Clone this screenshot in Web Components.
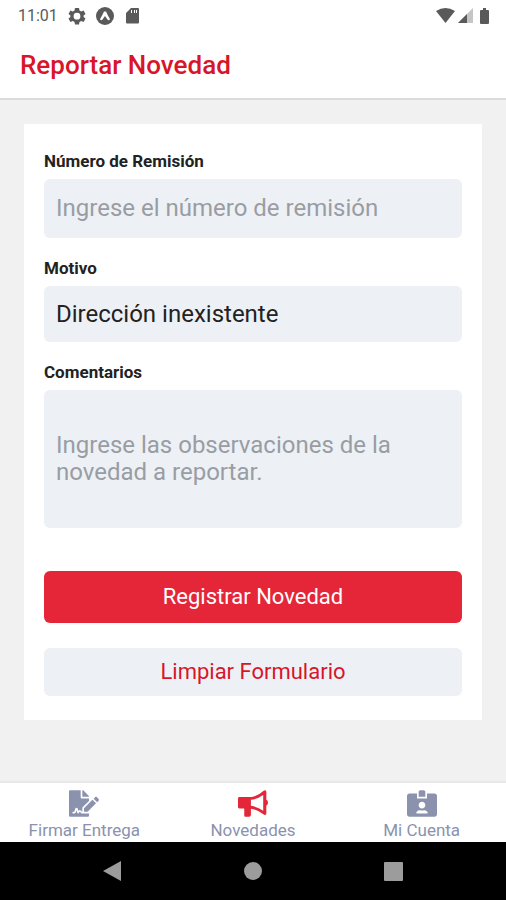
<!DOCTYPE html>
<html lang="es">
<head>
<meta charset="utf-8">
<meta name="viewport" content="width=device-width, initial-scale=1">
<title>Reportar Novedad</title>
<style>
  body {
    margin: 0;
    font-family: Roboto, "Liberation Sans", sans-serif;
    --red: #e52538;
    --red-text: #d9152a;
    --field: #edf1f6;
    --muted: #8a92ae;
  }
</style>
</head>
<body>
<report-app></report-app>

<script>
class StatusBar extends HTMLElement {
  constructor() {
    super();
    this.attachShadow({ mode: "open" });
  }

  connectedCallback() {
    this.shadowRoot.innerHTML = `
      <style>
        :host {
          display: flex;
          justify-content: space-between;
          height: 31px;
          padding: 0 13px 0 18px;
          background: #fff;
          color: #5a5a5a;
          font-size: 16px;
          line-height: 31px;
        }
        div {
          display: flex;
          align-items: center;
        }
        .left { gap: 9px; }
        .right { gap: 3px; }
        svg { display: block; fill: currentColor; }
      </style>
      <div class="left">
        <span>${this.getAttribute("time")}</span>
        <svg width="20" height="18" viewBox="0 0 20 18" aria-hidden="true"><path fill-rule="evenodd" d="M8 1h4l.5 2.500 1.700 1 2.400-.9 1.900 3.300L16.600 8.500v1.500l1.900 1.600-1.900 3.300-2.400-.9-1.700 1L12 17.500H8L7.500 15l-1.700-1-2.400.9-1.900-3.300L3.400 10V8.500L1.500 6.900l1.900-3.300 2.400.9 1.700-1zM10 5.800a3.400 3.400 0 1 0 0 6.800 3.400 3.400 0 0 0 0-6.800z"/></svg>
        <svg width="18" height="18" viewBox="0 0 18 18" aria-hidden="true"><circle cx="9" cy="9" r="9"/><path d="M8 4.500h2c1.300 3 2.500 5 4 7.700-.8 1.600-1.900 1.300-2.700.1L9 9l-2.300 3.300c-.8 1.200-1.900 1.500-2.700-.1 1.500-2.700 2.700-4.700 4-7.700z" fill="#fff"/></svg>
        <svg width="18" height="16" viewBox="0 0 18 16" aria-hidden="true"><path fill-rule="evenodd" d="M8 0h7q1 0 1 1v13.500q0 1-1 1H4q-1 0-1-1V5zM8 2v3h1V2zm3 0v3h1V2zm2 0v3h1V2z"/></svg>
      </div>
      <div class="right">
        <svg width="19" height="15" viewBox="0 0 19 15" aria-hidden="true"><path d="M9.500 15 0 3Q9.500-3 19 3z"/></svg>
        <svg width="15" height="15" viewBox="0 0 15 15" aria-hidden="true"><path d="M15 0v15H0z" opacity=".35"/><path d="M9 6v9H0z"/></svg>
        <svg width="17" height="16" viewBox="0 0 17 16" aria-hidden="true"><path d="M5 2h2V0h3v2h2q1 0 1 1v12q0 1-1 1H5q-1 0-1-1V3q0-1 1-1z"/></svg>
      </div>
    `;
  }
}

class PageHeader extends HTMLElement {
  constructor() {
    super();
    this.attachShadow({ mode: "open" });
  }

  connectedCallback() {
    this.shadowRoot.innerHTML = `
      <style>
        :host {
          display: block;
          padding: 18px 20px 17px;
          background: #fff;
          border-bottom: 2px solid #dcdcdc;
        }
        h1 {
          margin: 0;
          color: var(--red-text);
          font-size: 26px;
          font-weight: 500;
          line-height: 32px;
        }
      </style>
      <h1><slot></slot></h1>
    `;
  }
}

class FormField extends HTMLElement {
  constructor() {
    super();
    this.attachShadow({ mode: "open" });
  }

  connectedCallback() {
    this.shadowRoot.innerHTML = `
      <style>
        :host { display: block; }
        label {
          display: block;
          margin-bottom: 8px;
          color: #222;
          font-size: 17px;
          font-weight: 700;
          line-height: 20px;
        }
        input, select, textarea {
          display: block;
          box-sizing: border-box;
          width: 100%;
          margin: 0;
          padding: 16px 12px;
          border: 0;
          border-radius: 6px;
          appearance: none;
          resize: none;
          background: var(--field);
          color: #222;
          font: 24px/27px Roboto, "Liberation Sans", sans-serif;
        }
        select { padding: 15px 12px 14px; }
        textarea { padding: 42px 12px; height: 138px; overflow: hidden; }
        ::placeholder { color: #999da3; opacity: 1; }
      </style>
      <label for="control">${this.getAttribute("label")}</label>
      ${this.control()}
    `;
  }

  control() {
    const hint = this.getAttribute("placeholder") || "";
    switch (this.getAttribute("type")) {
      case "select":
        return `<select id="control"><option>${this.getAttribute("value")}</option></select>`;
      case "textarea":
        return `<textarea id="control" rows="2" placeholder="${hint}"></textarea>`;
      default:
        return `<input id="control" type="text" placeholder="${hint}">`;
    }
  }

  clear() {
    const el = this.shadowRoot.querySelector("#control");
    if (el.tagName === "SELECT") el.selectedIndex = 0;
    else el.value = "";
  }
}

class ActionButton extends HTMLElement {
  constructor() {
    super();
    this.attachShadow({ mode: "open" });
  }

  connectedCallback() {
    this.shadowRoot.innerHTML = `
      <style>
        :host { display: block; }
        button {
          display: block;
          width: 100%;
          padding: 10px 12px;
          border: 0;
          border-radius: 6px;
          background: var(--field);
          color: var(--red-text);
          font: 22px/28px Roboto, "Liberation Sans", sans-serif;
          cursor: pointer;
        }
        :host([primary]) button {
          padding: 12px;
          background: var(--red);
          color: #fff;
        }
      </style>
      <button type="button"><slot></slot></button>
    `;
  }
}

const TAB_ICONS = {
  sign: "M218.17 424.14c-2.95-5.92-8.09-6.52-10.17-6.52s-7.22.59-10.02 6.19l-7.67 15.34c-6.37 12.78-25.03 11.37-29.48-2.09L144 386.59l-10.61 31.88c-5.89 17.66-22.38 29.53-41 29.53H80c-8.84 0-16-7.16-16-16s7.16-16 16-16h12.39c4.83 0 9.11-3.08 10.64-7.66l18.19-54.64c3.3-9.81 12.44-16.41 22.78-16.41s19.48 6.59 22.77 16.41l13.88 41.64c19.75-16.19 54.06-9.7 66 14.16 1.89 3.78 5.49 5.95 9.36 6.26v-82.12l128-127.09V160H248c-13.2 0-24-10.8-24-24V0H24C10.7 0 0 10.7 0 24v464c0 13.3 10.7 24 24 24h336c13.3 0 24-10.7 24-24v-40l-128-.11c-16.12-.31-30.58-9.28-37.83-23.75zM384 121.9c0-6.3-2.5-12.4-7-16.9L279.1 7c-4.5-4.5-10.6-7-17-7H256v128h128v-6.1zm-96 225.06V416h68.99l161.68-162.78-67.88-67.88L288 346.96zm280.54-179.63l-31.87-31.87c-9.94-9.94-26.07-9.94-36.01 0l-27.25 27.25 67.88 67.88 27.25-27.25c9.95-9.94 9.95-26.07 0-36.01z",
  horn: "M24 130H260Q390 108 486 14Q500 0 522 0Q544 4 544 30V186Q576 200 576 240T544 294V450Q542 476 522 478Q502 478 486 464Q370 366 248 356V470Q246 500 222 512H140Q120 508 120 484V350H24Q0 346 0 322V158Q0 132 24 130zM248 186V300Q380 320 484 396V92Q370 172 248 186z",
  card: "M528 64H384v96H192V64H48C21.5 64 0 85.5 0 112v352c0 26.5 21.5 48 48 48h480c26.5 0 48-21.5 48-48V112c0-26.5-21.5-48-48-48zM288 224c35.3 0 64 28.7 64 64s-28.7 64-64 64-64-28.7-64-64 28.7-64 64-64zm93.3 224H194.7c-10.4 0-18.8-10-15.6-19.8 8.3-25.6 32.4-44.2 60.9-44.2h8.2c12.3 5.1 25.7 8 39.8 8s27.6-2.9 39.8-8h8.2c28.4 0 52.5 18.5 60.9 44.2 3.2 9.9-5.2 19.8-15.6 19.8zM352 32c0-17.7-14.3-32-32-32h-64c-17.7 0-32 14.3-32 32v96h128V32z"
};

class TabItem extends HTMLElement {
  constructor() {
    super();
    this.attachShadow({ mode: "open" });
  }

  connectedCallback() {
    this.shadowRoot.innerHTML = `
      <style>
        :host {
          display: block;
          flex: 1;
        }
        a {
          display: flex;
          flex-direction: column;
          align-items: center;
          gap: 3px;
          padding: 7px 0 2px;
          color: var(--muted);
          font-size: 17px;
          line-height: 20px;
          text-decoration: none;
        }
        svg { display: block; fill: currentColor; }
        :host([active]) svg { fill: var(--red); }
      </style>
      <a href="#${this.getAttribute("icon")}">
        <svg width="30" height="27" viewBox="0 0 576 512" aria-hidden="true"><path fill-rule="evenodd" d="${TAB_ICONS[this.getAttribute("icon")]}"/></svg>
        <slot></slot>
      </a>
    `;
  }
}

class TabBar extends HTMLElement {
  constructor() {
    super();
    this.attachShadow({ mode: "open" });
  }

  connectedCallback() {
    this.shadowRoot.innerHTML = `
      <style>
        :host {
          display: block;
          background: #fff;
          border-top: 2px solid #e8e8e8;
        }
        nav { display: flex; }
      </style>
      <nav><slot></slot></nav>
    `;
  }
}

class SystemNav extends HTMLElement {
  constructor() {
    super();
    this.attachShadow({ mode: "open" });
  }

  connectedCallback() {
    this.shadowRoot.innerHTML = `
      <style>
        :host {
          display: flex;
          justify-content: center;
          align-items: center;
          gap: 120px;
          height: 58px;
          background: #000;
        }
        button {
          padding: 0;
          border: 0;
          background: none;
        }
        svg { display: block; fill: #9c9c9c; }
      </style>
      <button type="button" aria-label="Atrás"><svg width="20" height="20" viewBox="0 0 20 20"><path d="M18 0v20L0 10z"/></svg></button>
      <button type="button" aria-label="Inicio"><svg width="20" height="20" viewBox="0 0 20 20"><circle cx="10" cy="10" r="9"/></svg></button>
      <button type="button" aria-label="Recientes"><svg width="20" height="20" viewBox="0 0 20 20"><rect x="1" y="1" width="19" height="19" rx="1"/></svg></button>
    `;
  }
}

class ReportApp extends HTMLElement {
  constructor() {
    super();
    this.attachShadow({ mode: "open" });
  }

  connectedCallback() {
    this.shadowRoot.innerHTML = `
      <style>
        :host {
          display: flex;
          flex-direction: column;
          min-height: 100vh;
          background: #f1f1f1;
        }
        main {
          flex: 1;
          padding: 24px;
        }
        form {
          display: flex;
          flex-direction: column;
          gap: 20px;
          padding: 27px 20px 24px;
          background: #fff;
        }
        .actions {
          display: flex;
          flex-direction: column;
          gap: 25px;
          margin-top: 23px;
        }
      </style>
      <status-bar time="11:01"></status-bar>
      <page-header>Reportar Novedad</page-header>
      <main>
        <form>
          <form-field label="Número de Remisión" placeholder="Ingrese el número de remisión"></form-field>
          <form-field type="select" label="Motivo" value="Dirección inexistente"></form-field>
          <form-field type="textarea" label="Comentarios" placeholder="Ingrese las observaciones de la novedad a reportar."></form-field>
          <div class="actions">
            <action-button primary>Registrar Novedad</action-button>
            <action-button id="clear">Limpiar Formulario</action-button>
          </div>
        </form>
      </main>
      <tab-bar>
        <tab-item icon="sign">Firmar Entrega</tab-item>
        <tab-item icon="horn" active>Novedades</tab-item>
        <tab-item icon="card">Mi Cuenta</tab-item>
      </tab-bar>
      <system-nav></system-nav>
    `;

    this.shadowRoot.querySelector("#clear").onclick = () => {
      this.shadowRoot.querySelectorAll("form-field").forEach(f => f.clear());
    };
  }
}

customElements.define("status-bar", StatusBar);
customElements.define("page-header", PageHeader);
customElements.define("form-field", FormField);
customElements.define("action-button", ActionButton);
customElements.define("tab-item", TabItem);
customElements.define("tab-bar", TabBar);
customElements.define("system-nav", SystemNav);
customElements.define("report-app", ReportApp);
</script>
</body>
</html>
